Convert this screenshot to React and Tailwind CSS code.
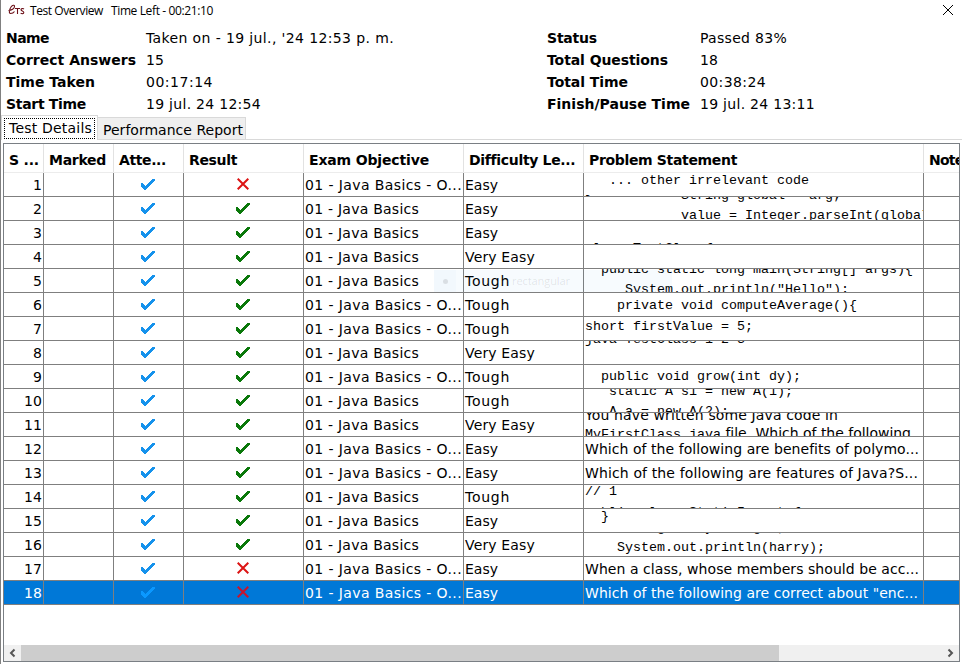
import { useLayoutEffect, useRef, useState } from "react";

// Spreads letters so a label fills the given width exactly.
function Label({ w, className = "", children }) {
  const ref = useRef(null);
  const [spacing, setSpacing] = useState(0);
  useLayoutEffect(() => {
    const natural = ref.current.getBoundingClientRect().width;
    setSpacing((w - natural) / children.length);
  }, []);
  return (
    <span ref={ref} className={`inline-block whitespace-pre ${className}`} style={{ letterSpacing: `${spacing}px` }}>
      {children}
    </span>
  );
}

const Check = ({ className }) => (
  <svg width="14" height="13" viewBox="0 0 14 13" className={className} fill="currentColor">
    <path d="M0 5h2v1h1v1h1v1h1V7h1V6h1V5h1V4h1V3h1V2h1V1h3v2h-1v1h-1v1h-1v1h-1v1H9v1H8v1H7v1H6v1H5v1H3v-1H2v-1H1V9H0z" />
  </svg>
);

const Cross = ({ className }) => (
  <svg width="12" height="12" viewBox="0 0 12 12" className={className} stroke="currentColor" strokeWidth="2" fill="none">
    <path d="M.7.700l10.600 10.600M11.300.700L.7 11.300" />
  </svg>
);

const left = [
  ["Name", 43, "Taken on - 19 jul., '24 12:53 p. m.", 248],
  ["Correct Answers", 130, "15", 18],
  ["Time Taken", 89, "00:17:14", 67],
  ["Start Time", 80, "19 jul. 24 12:54", 115],
];
const right = [
  ["Status", 50, "Passed 83%", 87],
  ["Total Questions", 121, "18", 18],
  ["Total Time", 81, "00:38:24", 66],
  ["Finish/Pause Time", 143, "19 jul. 24 13:11", 115],
];

const columns = [
  ["S ...", 30],
  ["Marked", 57],
  ["Atte...", 47],
  ["Result", 48],
  ["Exam Objective", 120],
  ["Difficulty Le...", 105],
  ["Problem Statement", 148],
  ["Notes", 42],
];

const levelWidth = { Easy: 33, "Very Easy": 70, Tough: 45 };

const rows = [
  { ok: false, long: true, level: "Easy", code: ["   ... other irrelevant code", "}"], shift: "-mt-[2px]" },
  { ok: true, level: "Easy", code: ["            String global = arg;", "            value = Integer.parseInt(global);"], shift: "-mt-[11px]" },
  { ok: true, level: "Easy", code: ["", "class TestClass{"], shift: "-mt-[2px]" },
  { ok: true, level: "Very Easy", code: [], shift: "mt-0" },
  { ok: true, level: "Tough", code: ["  public static long main(String[] args){", '     System.out.println("Hello");'], shift: "-mt-[9px]" },
  { ok: true, long: true, level: "Tough", code: ["    private void computeAverage(){"], shift: "mt-[3px]" },
  { ok: true, long: true, level: "Tough", code: ["short firstValue = 5;"], shift: "mt-0" },
  { ok: true, level: "Very Easy", code: ["java TestClass 1 2 3"], shift: "-mt-[11px]" },
  { ok: true, long: true, level: "Tough", code: ["  public void grow(int dy);"], shift: "mt-[2px]" },
  { ok: true, level: "Tough", code: ["   static A s1 = new A(1);", "   A a = new A(2);"], shift: "-mt-[7px]" },
  { ok: true, level: "Very Easy", mixed: true },
  { ok: true, long: true, level: "Easy", text: "Which of the following are benefits of polymo...", w: 334 },
  { ok: true, long: true, level: "Easy", text: "Which of the following are features of Java?S...", w: 333 },
  { ok: true, level: "Tough", code: ["// 1", "public class StaticImports{"], shift: "-mt-[3px]", gap: "gap-px" },
  { ok: true, level: "Easy", code: ["  }"], shift: "-mt-[2px]" },
  { ok: true, level: "Very Easy", code: ["    String harry = magic;", "    System.out.println(harry);"], shift: "-mt-[15px]" },
  { ok: false, long: true, level: "Easy", text: "When a class, whose members should be acc...", w: 334 },
  { ok: false, long: true, level: "Easy", text: 'Which of the following are correct about "enc...', w: 333, selected: true },
];

const grid = "grid grid-cols-[40px_70px_70px_120px_160px_120px_340px_35px]";
const cell = "h-6 min-w-0 overflow-hidden border-b border-r border-[#7f7f7f] whitespace-nowrap leading-[25px]";

function Problem({ row }) {
  if (row.text) return <div className="pl-[1px]"><Label w={row.w}>{row.text}</Label></div>;
  if (row.mixed)
    return (
      <div className="-mt-[7px] pl-[1px] leading-[18px]">
        <div className="h-[18px]"><Label w={253}>You have written some Java code in</Label></div>
        <div className="h-[18px]">
          <span className="font-['Liberation_Mono',monospace] text-[13.333px]">MyFirstClass.java</span>
          <Label w={190}> file. Which of the following</Label>
        </div>
      </div>
    );
  return (
    <div className={`flex flex-col pl-[1px] font-['Liberation_Mono',monospace] text-[13.333px] leading-5 ${row.gap ?? ""} ${row.shift}`}>
      {row.code.map((line, i) => (
        <div key={i} className="h-5 whitespace-pre">{line}</div>
      ))}
    </div>
  );
}

function Info({ items, className }) {
  return (
    <div className={`grid auto-rows-[22px] leading-[22px] ${className}`}>
      {items.map(([name, nw, value, vw]) => (
        <div key={name} className="contents">
          <div><Label w={nw} className="font-bold">{name}</Label></div>
          <div><Label w={vw}>{value}</Label></div>
        </div>
      ))}
    </div>
  );
}

export default function App() {
  return (
    <div className="relative flex h-[664px] w-[962px] flex-col overflow-hidden border-l border-[#808080] bg-white font-['DejaVu_Sans',Verdana,sans-serif] text-[14px] text-black">
      <header className="flex h-[27px] items-start pl-[7px] font-['Open_Sans',sans-serif] text-[12px] leading-[22px]">
        <svg width="18" height="22" viewBox="0 0 18 22" fill="none" stroke="#6c1018" strokeWidth="1.1">
          <path d="M.5 10.500c3 0 6-2 6-4s-2-1.500-3.500.5-2.500 6.500-.5 6.500 3-.5 4-2M7 8.500h5M9.500 8.500v5.500M16 9c-1-.8-3-.5-3 .8s2.800 1.200 2.800 2.700-2.200 1.400-3.200.6" />
        </svg>
        <div className="w-[81px] pl-1"><Label w={73}>Test Overview</Label></div>
        <div className="flex-1 pl-[4px]"><Label w={102}>Time Left - 00:21:10</Label></div>
        <svg width="12" height="12" viewBox="0 0 12 12" className="mr-[8px] mt-[4px]" stroke="#000" fill="none">
          <path d="M1 1l10 10M11 1L1 11" />
        </svg>
      </header>

      <section className="flex h-[90px] pl-[5px]">
        <Info items={left} className="w-[541px] grid-cols-[140px_1fr]" />
        <Info items={right} className="flex-1 grid-cols-[153px_1fr]" />
      </section>

      <nav className="flex h-[23px] items-end">
        <div className="flex h-[25px] w-[97px] shrink-0 border border-b-0 border-[#d9d9d9] bg-white p-[2px] pb-[1px]">
          <div className="flex-1 border border-dotted border-black pl-1 leading-[19px]"><Label w={83}>Test Details</Label></div>
        </div>
        <div className="h-[23px] w-[148px] border border-l-0 border-[#d9d9d9] bg-[#efefef] pl-[5px] leading-[25px]">
          <Label w={140}>Performance Report</Label>
        </div>
        <div className="h-px flex-1 bg-[#d9d9d9]" />
      </nav>

      <main className="ml-[2px] mt-[3px] flex h-[519px] w-[957px] flex-col border border-[#7a7f84]">
        <div className={`${grid} h-[29px] border-b border-[#ececec]`}>
          {columns.map(([name, w], i) => (
            <div key={name} className={`overflow-hidden pl-[5px] font-bold leading-[32px] ${i < 7 ? "border-r border-[#e2e2e2]" : ""}`}>
              <Label w={w}>{name}</Label>
            </div>
          ))}
        </div>
        {rows.map((row, i) => (
          <div key={i} className={`${grid} ${row.selected ? "bg-[#0078d7] text-white" : ""}`}>
            <div className={`${cell} pr-px text-right`}><Label w={i < 9 ? 9 : 18}>{String(i + 1)}</Label></div>
            <div className={cell} />
            <div className={`${cell} flex justify-center pr-[2px] pt-[5px]`}>
              <Check className={row.selected ? "text-[#0a98ff]" : "text-[#1592ec]"} />
            </div>
            <div className={`${cell} flex justify-center pr-[2px] pt-[5px]`}>
              {row.ok ? <Check className="text-[#0a780a]" /> : <Cross className={row.selected ? "text-[#c8142c]" : "text-[#dc1414]"} />}
            </div>
            <div className={`${cell} pl-[1px]`}>
              <Label w={row.long ? 157 : 114}>{row.long ? "01 - Java Basics - O..." : "01 - Java Basics"}</Label>
            </div>
            <div className={`${cell} pl-[1px]`}><Label w={levelWidth[row.level]}>{row.level}</Label></div>
            <div className={cell}><Problem row={row} /></div>
            <div className="h-6 border-b border-[#7f7f7f]" />
          </div>
        ))}
        <div className="flex-1" />
        <div className="flex h-4 bg-[#f0f0f0]">
          <svg width="17" height="16" viewBox="0 0 17 16" fill="none" stroke="#555" strokeWidth="2">
            <path d="M10.500 4.500L7 8l3.500 3.500" />
          </svg>
          <div className="w-[758px] bg-[#cdcdcd]" />
          <div className="flex-1" />
          <svg width="17" height="16" viewBox="0 0 17 16" fill="none" stroke="#555" strokeWidth="2">
            <path d="M6.500 4.500L10 8l-3.500 3.500" />
          </svg>
        </div>
      </main>

      {/* Fading tooltip left over the table */}
      <div className="absolute left-[433px] top-[270px] flex h-[22px] w-[238px] items-center bg-[#0078d7]/[0.03] font-['Open_Sans',sans-serif] text-[11px] text-black/10">
        <div className="flex h-full w-[22px] items-center justify-center bg-[#0078d7]/[0.02]">
          <div className="size-[5px] rounded-full bg-black/10" />
        </div>
        <div className="pl-[56px]"><Label w={58}>rectangular</Label></div>
      </div>
    </div>
  );
}
